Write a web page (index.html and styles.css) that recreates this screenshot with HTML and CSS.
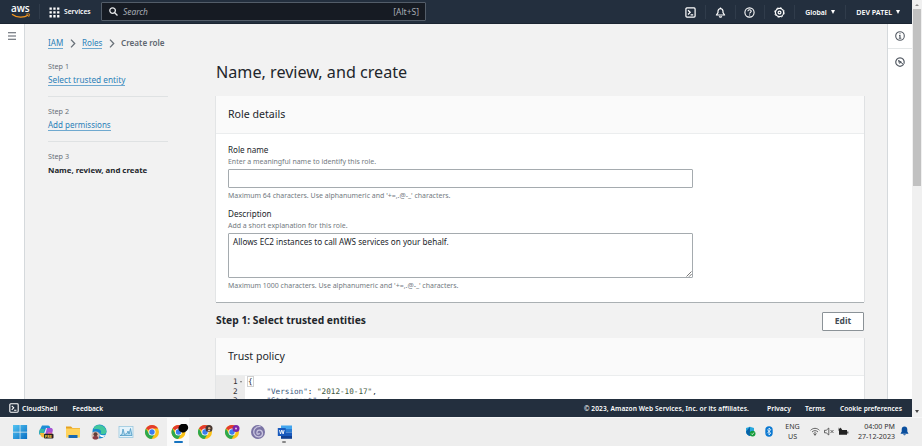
FILE: index.html
```html
<!DOCTYPE html>
<html lang="en">
<head>
<meta charset="utf-8">
<title>Create role</title>
<link rel="stylesheet" href="styles.css">
</head>
<body>
<div class="screen">
  <div class="browser">
    <div class="app">
      <header class="topbar">
        <div class="logo"><span>aws</span>
          <svg width="20" height="6" viewBox="0 0 20 6"><path d="M1 1.2C6 5 13 5 17.3 2" fill="none" stroke="#f7981f" stroke-width="1.3"/><path d="M15.2 1.2c1.5-.5 3-.5 3.3-.1.2.5-.2 1.8-1 2.8" fill="none" stroke="#f7981f" stroke-width=".9"/></svg>
        </div>
        <div class="services">
          <svg width="11" height="11" viewBox="0 0 11 11" fill="#fff"><path d="M.5 .5h2.3v2.3H.5zM4.3 .5h2.3v2.3H4.3zM8.1 .5h2.3v2.3H8.1zM.5 4.3h2.3v2.3H.5zM4.3 4.3h2.3v2.3H4.3zM8.1 4.3h2.3v2.3H8.1zM.5 8.1h2.3v2.3H.5zM4.3 8.1h2.3v2.3H4.3zM8.1 8.1h2.3v2.3H8.1z"/></svg>
          <span>Services</span>
        </div>
        <div class="search">
          <svg width="9" height="9" viewBox="0 0 9 9" fill="none" stroke="#e6e8ea" stroke-width="1.3"><circle cx="3.6" cy="3.6" r="2.8"/><path d="M5.7 5.7l2.8 2.8"/></svg>
          <span class="placeholder">Search</span><span class="shortcut">[Alt+S]</span>
        </div>
        <nav class="tools">
          <div class="tool"><svg width="11" height="11" viewBox="0 0 11 11" fill="none" stroke="#fff" stroke-width="1.2"><rect x=".9" y=".9" width="9.2" height="9.2" rx="1"/><path d="M3 3.2l2.2 2.1L3 7.5M5.6 7.9h2.6"/></svg></div>
          <div class="tool"><svg width="11" height="11" viewBox="0 0 11 11" fill="none" stroke="#fff" stroke-width="1.2"><path d="M5.5.6v1M1.4 8h8.2L8 5.7V4.2a2.5 2.5 0 0 0-5 0v1.5z" stroke-linejoin="round"/><path d="M4.2 9.4c.5.9 2.1.9 2.6 0"/></svg></div>
          <div class="tool"><svg width="11" height="11" viewBox="0 0 11 11" fill="none" stroke="#fff" stroke-width="1.1"><circle cx="5.5" cy="5.5" r="4.6"/><path d="M3.9 4.3c0-2.1 3.3-2 3.3-.1 0 1.1-1.6 1.2-1.6 2.4M5.6 7.4v1.1"/></svg></div>
          <div class="tool"><svg width="11" height="11" viewBox="0 0 11 11" fill="none" stroke="#fff"><circle cx="5.5" cy="5.5" r="4.1" stroke-width="1.2"/><circle cx="5.5" cy="5.5" r="4.8" stroke-width=".9" stroke-dasharray="1.9 1.87"/><circle cx="5.5" cy="5.5" r="1.4" stroke-width="1.2"/></svg></div>
          <div class="menu region">Global<i class="caret"></i></div>
          <div class="menu account">DEV PATEL<i class="caret"></i></div>
        </nav>
      </header>

      <div class="body">
        <aside class="rail left">
          <svg width="8" height="8" viewBox="0 0 8 8" stroke="#545b64" stroke-width="1.1"><path d="M0 .8h8M0 4h8M0 7.2h8"/></svg>
        </aside>

        <div class="page">
          <div class="side">
            <nav class="crumbs">
              <a>IAM</a>
              <svg width="6" height="9" viewBox="0 0 6 9" fill="none" stroke="#687078" stroke-width="1.3"><path d="M1 .6l3.7 3.9L1 8.4"/></svg>
              <a>Roles</a>
              <svg width="6" height="9" viewBox="0 0 6 9" fill="none" stroke="#687078" stroke-width="1.3"><path d="M1 .6l3.7 3.9L1 8.4"/></svg>
              <b>Create role</b>
            </nav>
            <ol class="steps">
              <li><small>Step 1</small><a>Select trusted entity</a></li>
              <li><small>Step 2</small><a>Add permissions</a></li>
              <li><small>Step 3</small><strong>Name, review, and create</strong></li>
            </ol>
          </div>

          <main class="main">
            <h1>Name, review, and create</h1>
            <section class="panel details">
              <h2>Role details</h2>
              <div class="fields">
                <div class="label">Role name</div>
                <div class="hint">Enter a meaningful name to identify this role.</div>
                <div class="input"></div>
                <div class="hint below">Maximum 64 characters. Use alphanumeric and '+=,.@-_' characters.</div>
                <div class="label second">Description</div>
                <div class="hint">Add a short explanation for this role.</div>
                <div class="input area">Allows EC2 instances to call AWS services on your behalf.
                  <svg class="grip" width="6" height="6" viewBox="0 0 6 6" stroke="#555" stroke-width=".8"><path d="M.5 5.5l5-5M3 5.7L5.7 3"/></svg>
                </div>
                <div class="hint below">Maximum 1000 characters. Use alphanumeric and '+=,.@-_' characters.</div>
              </div>
            </section>
            <div class="section-head"><h3>Step 1: Select trusted entities</h3><span class="button">Edit</span></div>
            <section class="panel policy">
              <h2>Trust policy</h2>
              <div class="code">
                <div class="line"><span class="num">1<i class="fold"></i></span><code><span class="brace">{</span></code></div>
                <div class="line"><span class="num">2</span><code>    <span class="key">"Version"</span>: <span class="str">"2012-10-17"</span>,</code></div>
                <div class="line"><span class="num">3</span><code>    <span class="key">"Statement"</span>: [</code></div>
              </div>
            </section>
          </main>
        </div>

        <aside class="rail right">
          <div class="rail-item"><svg width="10" height="10" viewBox="0 0 10 10" fill="none" stroke="#545b64" stroke-width="1.1"><circle cx="5" cy="5" r="4.3"/><path d="M5 2.2v1.1M4 4.6h1v2.6M3.8 7.3h2.5"/></svg></div>
          <div class="rail-item"><svg width="10" height="10" viewBox="0 0 10 10" fill="none" stroke="#545b64" stroke-width="1.2"><path d="M8.300 7.700A4.200 4.200 0 1 1 9.100 4.200v2.500"/><path d="M3.300 3.500L8.900 7.700M3.600 3.500l.8 2.800 2-1.200z" stroke-width="1"/></svg></div>
        </aside>
      </div>

      <footer class="footer">
        <svg width="10" height="10" viewBox="0 0 11 11" fill="none" stroke="#fff" stroke-width="1.2"><rect x=".9" y=".9" width="9.2" height="9.2" rx="1"/><path d="M3 3.2l2.2 2.1L3 7.5M5.6 7.9h2.6"/></svg>
        <span class="shell">CloudShell</span><span class="feedback">Feedback</span>
        <span class="copy">© 2023, Amazon Web Services, Inc. or its affiliates.</span><span class="privacy">Privacy</span><span class="terms">Terms</span><span class="cookies">Cookie preferences</span>
      </footer>
    </div>
    <div class="scrollbar"><i class="arrow up"></i><div class="thumb"></div><i class="arrow down"></i></div>
  </div>

  <div class="taskbar">
    <div class="apps">
      <div class="task"><svg width="16" height="16" viewBox="0 0 16 16"><defs><linearGradient id="win" x2="1" y2="1"><stop stop-color="#54c4f2"/><stop offset="1" stop-color="#0a6fc4"/></linearGradient></defs><path fill="url(#win)" d="M1 1h6.7v6.7H1zM8.4 1h6.7v6.7H8.4zM1 8.4h6.7v6.7H1zM8.4 8.4h6.7v6.7H8.4z"/></svg></div>
      <div class="task"><svg width="16" height="16" viewBox="0 0 16 16"><path fill="#1d8ed6" d="M4 1.5h6c1.5 0 2 1 2.3 2.5H8L5.5 11H3C1 11 .8 9 1.3 7z"/><path fill="#35b9a2" d="M2 5h4.5l-1.5 6H3C1 11 1 8 2 5z"/><path fill="#a653d3" d="M9 4h3.5c2.5 0 2.7 2 2 4l-1.5 5H6.5z"/><path fill="#ec6a91" d="M10.5 8l3.8 1-1.2 4H9z"/><path fill="#f5b93a" d="M2 9h4l1.5 4.5H5C3 13.5 2.3 11 2 9z"/><rect x="6" y="9.7" width="9.5" height="4.8" rx="1" fill="#222"/><text x="6.8" y="13.5" class="pre">PRE</text></svg></div>
      <div class="task"><svg width="16" height="16" viewBox="0 0 16 16"><path fill="#e5a220" d="M1 2.500h5l1.500 1.500H15v5H1z"/><path fill="#ffd35c" d="M1 4.500h14v9H1z"/><path fill="#1769b5" d="M3.500 11h9v3h-9z"/></svg></div>
      <div class="task"><svg width="16" height="16" viewBox="0 0 16 16"><circle cx="8.5" cy="7.5" r="7" fill="#1385cf"/><path fill="#42c79d" d="M5 1.500C10-.5 15.500 3 15.400 8c0 2.500-4.500 3-6 1.500 2-3-1-5.500-7-4C3 3.500 4 2 5 1.500z"/><path fill="#fff" d="M8.500 7.500c-1 3 1.500 4.500 6 3.500l-2 2c-3 .5-5-1.500-4-5.500z"/><circle cx="4.500" cy="11.500" r="4" fill="#d7b9b3"/><circle cx="4.500" cy="10.300" r="2" fill="#623d36"/><path fill="#873c47" d="M1.500 14c1-3 5-3 6 0-1.500 2-4.500 2-6 0z"/></svg></div>
      <div class="task"><svg width="16" height="16" viewBox="0 0 16 16"><rect x="1" y="2.500" width="14" height="11" fill="#e5f3fb" stroke="#9ac7df" stroke-width=".8"/><path d="M2 11.500l2-1 1-5.500 1.500 5.500L9 9.500 10 7l1 3 1.500-5.500 1.500 7z" fill="#b3dcf0" stroke="#3d8fbd" stroke-width=".7"/></svg></div>
      <div class="task"><svg width="16" height="16" viewBox="0 0 16 16"><g id="chrome"><circle cx="8" cy="8" r="7" fill="#fbc116"/><path fill="#e33b2e" d="M8 8L1.900 4.500A7 7 0 0 1 14.100 4.500H8z"/><path fill="#2da94f" d="M1.900 4.500A7 7 0 0 0 7.500 15L11 9.800 5 9.800z"/><circle cx="8" cy="8" r="3.500" fill="#fff"/><circle cx="8" cy="8" r="2.700" fill="#3b7ded"/></g></svg></div>
      <div class="task active"><svg width="20" height="16" viewBox="0 0 20 16"><use href="#chrome" x="1.500"/><ellipse cx="14.300" cy="4" rx="5" ry="4.300" transform="rotate(-25 14.300 4)" fill="#050505"/></svg></div>
      <div class="task"><svg width="16" height="16" viewBox="0 0 16 16"><use href="#chrome"/><circle cx="12" cy="4.500" r="3.500" fill="#463630"/><circle cx="12.200" cy="4.300" r="1.200" fill="#d3a177"/><path d="M10.500 7.200c.5-1.500 2.500-1.500 3 0z" fill="#ddd"/></svg></div>
      <div class="task"><svg width="16" height="16" viewBox="0 0 16 16"><use href="#chrome"/><circle cx="12" cy="4.500" r="3.500" fill="#7a25a8"/><circle cx="12" cy="4.500" r="1" fill="#e4caf0"/></svg></div>
      <div class="task"><svg width="16" height="16" viewBox="0 0 16 16"><circle cx="8" cy="8" r="7" fill="#7a73a4"/><path d="M10.500 2.500C5 2 2.500 7 4.500 10.500s8 3 8-1-5-4.500-5.500-1.500 2 2.500 2.500 1" fill="none" stroke="#c8c4de" stroke-width="1.300"/></svg></div>
      <div class="task word"><svg width="16" height="16" viewBox="0 0 16 16"><path fill="#41a5ee" d="M4 1.500h11V5H4z"/><path fill="#2b7cd3" d="M4 5h11v3.500H4z"/><path fill="#185abd" d="M4 8.500h11V12H4z"/><path fill="#103f91" d="M4 12h11v2.800H4z"/><rect x=".8" y="4" width="8" height="8" rx=".6" fill="#185abd"/><path d="M2.500 6l1 4 1.300-4 1.300 4 1-4" fill="none" stroke="#fff" stroke-width=".9"/></svg></div>
    </div>
    <div class="tray">
      <svg class="shield" width="11" height="11" viewBox="0 0 11 11"><path fill="#28a8dd" d="M1 2l4-1.300L9 2v3.500C9 8 7 9.500 5 10 3 9.500 1 8 1 5.500z"/><path fill="#0862a8" d="M5 .7V10C3 9.500 1 8 1 5.500z"/><circle cx="7.600" cy="7.600" r="2.900" fill="#169b3b"/><path d="M6.300 7.600l1 1 1.600-2" fill="none" stroke="#fff" stroke-width=".8"/></svg>
      <svg class="bt" width="8" height="11" viewBox="0 0 8 11"><rect x=".3" y=".3" width="7.400" height="10.400" rx="3.700" fill="#0a78d1"/><path d="M2.200 3.600l3.600 3.600L4 8.900V2l1.800 1.700-3.600 3.600" fill="none" stroke="#fff" stroke-width=".8"/></svg>
      <div class="lang"><span>ENG</span><span>US</span></div>
      <svg class="wifi" width="10" height="9" viewBox="0 0 10 9" fill="none" stroke="#555" stroke-width=".9"><path d="M.6 3.300c2.500-2.600 6.300-2.600 8.800 0M2 5c1.700-1.800 4.300-1.800 6 0M3.500 6.500c.9-.9 2.100-.9 3 0"/><circle cx="5" cy="7.600" r=".6" fill="#333"/></svg>
      <svg class="mute" width="10" height="9" viewBox="0 0 10 9" fill="none" stroke="#444" stroke-width=".8"><path d="M.5 3.300h1.700L4.800 1v7L2.200 5.800H.5zM6.500 3l3 3M9.500 3l-3 3"/></svg>
      <svg class="battery" width="11" height="9" viewBox="0 0 11 9"><path fill="#222" d="M1 3h8v4.800H1zM9.300 4.400h1v2h-1zM.800.500l1 1.500.8-1.500L4.200 3l-1.800 2L.5 3.600z"/></svg>
      <div class="clock"><span>04:00 PM</span><span>27-12-2023</span></div>
      <svg class="bell" width="9" height="10" viewBox="0 0 9 10" fill="#0a4f9e"><path d="M4.500.5C2.700.5 1.700 1.800 1.700 3.500v2L.5 7.700h8L7.300 5.500v-2C7.300 1.800 6.300.5 4.500.5zM3.200 8.200h2.600c-.3 1.500-2.300 1.500-2.600 0z"/></svg>
    </div>
  </div>
</div>
</body>
</html>
```
FILE: styles.css
```css
* { box-sizing: border-box; }
body { margin: 0; font-family: "Noto Sans", "Open Sans", sans-serif; color: #22262b; }
svg { display: block; flex: none; }
h1, h2, h3, ol { margin: 0; padding: 0; font-weight: 400; }

.screen { width: 922px; height: 446px; display: flex; flex-direction: column; overflow: hidden; }
.browser { display: flex; height: 417px; }
.app { width: 912px; display: flex; flex-direction: column; }

/* top bar */
.topbar { height: 24px; flex: none; display: flex; align-items: center; background: #232f3e; color: #fff; border-bottom: 1px solid #1b2532; }
.logo { width: 40px; height: 15px; padding-left: 11px; border-right: 1px solid #303c4b; font: 600 10px/9px "Open Sans", sans-serif; letter-spacing: -.1px; }
.logo span { display: block; height: 9px; }
.services { width: 61px; padding-left: 9px; display: flex; align-items: center; gap: 4px; font-size: 6.7px; font-weight: 600; line-height: 10px; padding-top: 1px; }
.search { width: 325px; height: 19px; display: flex; align-items: center; padding: 0 6px 0 7px; background: #161b23; border: 1px solid #535d69; border-radius: 1px; font-size: 8.4px; color: #a7adb5; }
.placeholder { margin-left: 5px; font-style: italic; }
.shortcut { margin-left: auto; font-size: 8.5px; }
.tools { margin-left: 250px; display: flex; align-items: center; font-weight: 600; padding-top: 1px; }
.tool { width: 29.8px; height: 14px; display: flex; align-items: center; justify-content: center; border-right: 1px solid #303c4b; }
.menu { display: flex; align-items: center; gap: 4px; white-space: nowrap; height: 14px; }
.region { width: 51px; padding-left: 10px; font-size: 6.9px; border-right: 1px solid #303c4b; }
.account { padding-left: 10px; font-size: 7.17px; }
.caret { border: 2.5px solid transparent; border-top: 4px solid #fff; border-bottom: 0; }

/* page frame */
.body { height: 375px; display: flex; overflow: hidden; }
.rail { background: #fff; flex: none; }
.left { width: 25px; padding: 8px 0 0 8px; border-right: 1px solid #d5d9dc; }
.right { width: 25px; border-left: 1px solid #d5d9dc; }
.rail-item { height: 25px; display: flex; align-items: center; justify-content: center; border-bottom: 1px solid #e4e7e8; }
.rail-item + .rail-item { border: 0; }
.page { width: 862px; display: flex; background: #f2f2f2; }
.side { width: 191px; padding: 13px 0 0 23px; }
.main { width: 648px; }

/* navigation */
a { color: #2a7fb8; border-bottom: 1px solid #6fa9cf; }
.crumbs { display: flex; align-items: center; height: 12px; font-size: 8.1px; line-height: 10px; white-space: nowrap; }
.crumbs svg { margin: 0 6px 0 6.7px; }
.crumbs b { color: #5f6770; font-weight: 600; }
.steps { list-style: none; margin-top: 11px; width: 120px; }
.steps li { height: 36px; margin-bottom: 9px; border-bottom: 1px solid #dfe2e3; }
.steps li:first-child { height: 37px; margin-bottom: 8px; }
.steps li:nth-child(2) { height: 37px; margin-bottom: 8px; }
.steps li:last-child { border: 0; }
.steps small { display: block; font-size: 7.2px; line-height: 12px; color: #687078; margin-bottom: 3px; }
.steps a { display: inline-block; font-size: 8.25px; line-height: 10px; vertical-align: top; }
.steps li:nth-child(2) a { font-size: 8px; }
.steps strong { display: block; font-size: 7.85px; line-height: 10px; white-space: nowrap; }

/* content */
h1 { font-size: 16.15px; line-height: 24px; margin-top: 36px; margin-bottom: 12px; }
.panel { background: #fff; box-shadow: -1px 0 0 #e3e5e6, 1px 0 0 #dfe1e3, 0 1px 0 #aab0b3; }
.details { height: 206px; }
.panel h2 { height: 38px; padding-left: 12px; font-size: 10.6px; line-height: 36px; background: #fafafa; border-bottom: 1px solid #ebedee; }
.fields { padding: 10px 0 0 12px; }
.label { font-size: 8.1px; line-height: 12px; }
.second { margin-top: 7px; }
.hint { font-size: 6.97px; line-height: 11px; color: #727980; }
.input { width: 465px; height: 19px; margin-top: 2px; border: 1px solid #a5abaf; border-radius: 1px; background: #fff; }
.area { position: relative; height: 45px; margin-top: 2px; padding-left: 4px; font-size: 8.17px; line-height: 16px; }
.grip { position: absolute; right: 0; bottom: 0; }
.below { margin-top: 2px; }
.section-head { display: flex; justify-content: space-between; align-items: center; height: 36px; padding-top: 2px; }
h3 { font-size: 10.27px; font-weight: 700; line-height: 16px; padding-bottom: 2px; }
.button { width: 42px; height: 19px; border: 1px solid #8b9297; border-radius: 1px; background: #fff; color: #444c55; font-size: 8.5px; font-weight: 700; line-height: 16px; text-align: center; }

/* policy code */
.code { font: 7.65px/9.6px "DejaVu Sans Mono", monospace; background: linear-gradient(90deg, #ebebeb 29px, #fff 29px); padding-top: 1px; }
.line { display: flex; height: 9.6px; }
.num { width: 29px; padding-left: 17px; display: flex; align-items: center; gap: 2px; color: #333; }
.fold { border: 1.5px solid transparent; border-top: 2px solid #777; border-bottom: 0; }
code { font: inherit; white-space: pre; padding-left: 3px; }
.brace { outline: 1px solid #d0d0d0; }
.key { color: #3c5a80; }
.str { color: #3f5740; }

/* footer */
.footer { height: 18px; flex: none; display: flex; align-items: center; padding-left: 9px; background: #232f3e; color: #fff; font-size: 6.6px; font-weight: 600; white-space: nowrap; }
.shell { width: 50.5px; margin-left: 3px; font-size: 6.9px; }
.feedback { width: 511.5px; }
.copy { width: 183px; letter-spacing: .08px; }
.privacy { width: 38px; font-size: 6.8px; }
.terms { width: 35px; font-size: 6.8px; }

/* scrollbar */
.scrollbar { width: 10px; background: #f0f0f0; display: flex; flex-direction: column; align-items: center; }
.thumb { width: 8px; height: 177px; margin-top: 3px; background: #c1c1c1; }
.arrow { border: 2.5px solid transparent; }
.up { margin-top: 4px; border-top: 0; border-bottom: 2.5px solid #8a8a8a; }
.down { margin-top: auto; margin-bottom: 4px; border-top: 3px solid #444; border-bottom: 0; }

/* taskbar */
.taskbar { height: 29px; display: flex; justify-content: space-between; background: #eeeeee; border-top: 1px solid #f7f7f7; }
.apps { display: flex; padding-left: 6.3px; }
.task { position: relative; width: 26.5px; height: 29px; padding-bottom: 2px; display: flex; align-items: center; justify-content: center; }
.active { background: linear-gradient(90deg, transparent 2px, #fafafa 2px 24px, transparent 24px); }
.active::after, .word::after { content: ""; position: absolute; bottom: 4px; left: 9px; width: 9px; height: 2px; border-radius: 1px; background: #1673c0; }
.word::after { left: 11px; width: 4px; background: #888; }
.pre { font: 700 3.8px "Noto Sans", sans-serif; fill: #ffd34d; }
.tray { display: flex; align-items: center; width: 177px; padding-bottom: 2px; color: #333; font-size: 7.1px; line-height: 10px; }
.tray span { display: block; white-space: nowrap; }
.bt { margin-left: 9px; }
.lang { width: 19px; margin-left: 10px; text-align: center; }
.wifi { margin-left: 8px; }
.mute { margin-left: 4px; }
.battery { margin-left: 4px; }
.clock { width: 42px; margin-left: 4px; text-align: right; }
.bell { margin-left: 5px; }
```
